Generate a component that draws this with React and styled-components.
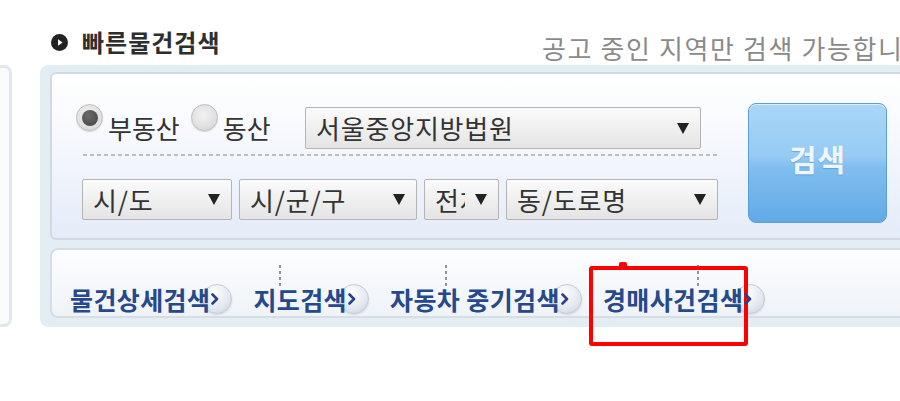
import React from "react";
import styled, { createGlobalStyle } from "styled-components";

//Global
const GlobalStyle = createGlobalStyle`
  html, body {
    margin: 0;
    padding: 0;
    background: #fff;
  }
  body {
    font-family: "Noto Sans CJK KR", "Noto Sans", sans-serif;
  }
`;

const courtSelect = { label: "서울중앙지방법원", width: 396 };
const areaSelects = [
  { label: "시/도", width: 150 },
  { label: "시/군/구", width: 178 },
  { label: "전체", width: 75 },
  { label: "동/도로명", width: 212 },
];
const links = ["물건상세검색", "지도검색", "자동차 중기검색", "경매사건검색"];
const separators = [227, 393, 645];

const PlayIcon = () => (
  <svg width="17" height="17" viewBox="0 0 17 17">
    <circle cx="8.5" cy="8.5" r="8.5" fill="#222" />
    <path d="M7 5.2 L11.6 8.5 L7 11.8 Z" fill="#fff" />
  </svg>
);

const Chevron = () => (
  <svg width="8" height="12" viewBox="0 0 8 12">
    <path
      d="M1.5 1.5 L6 6 L1.5 10.5"
      fill="none"
      stroke="#2c3f8c"
      strokeWidth="2.6"
      strokeLinecap="round"
      strokeLinejoin="round"
    />
  </svg>
);

const QuickSearch = () => {
  return (
    <Page>
      <Header>
        <Title>
          <PlayIcon />
          빠른물건검색
        </Title>
        <Note>공고 중인 지역만 검색 가능합니다</Note>
      </Header>

      <Body>
        <SidePanel />
        <Frame>
          <SearchBox>
            <Form>
              <TopRow>
                <Radio $checked />
                <RadioLabel>부동산</RadioLabel>
                <Radio />
                <RadioLabel $last>동산</RadioLabel>
                <Select $w={courtSelect.width} $push>
                  <SelectText>{courtSelect.label}</SelectText>
                  <Arrow />
                </Select>
              </TopRow>
              <Divider />
              <AreaRow>
                {areaSelects.map((s) => (
                  <Select key={s.label} $w={s.width}>
                    <SelectText>{s.label}</SelectText>
                    <Arrow />
                  </Select>
                ))}
              </AreaRow>
            </Form>
            <SearchButton>검색</SearchButton>
          </SearchBox>

          <LinkBar>
            {separators.map((x) => (
              <Separator key={x} style={{ left: x }} />
            ))}
            {links.map((l) => (
              <LinkItem key={l} href="#">
                <LinkText>{l}</LinkText>
                <ArrowCircle>
                  <Chevron />
                </ArrowCircle>
              </LinkItem>
            ))}
          </LinkBar>
        </Frame>
      </Body>

      <Highlight />
    </Page>
  );
};

const App = () => (
  <>
    <GlobalStyle />
    <QuickSearch />
  </>
);

const Page = styled.div`
  position: relative;
  width: 900px;
  height: 401px;
  overflow: hidden;
  background: #fff;
`;

const Header = styled.div`
  display: flex;
  align-items: flex-start;
  height: 65px;
  padding-left: 51px;
  box-sizing: border-box;
`;

const Title = styled.h2`
  flex: 0 0 491px;
  display: flex;
  align-items: center;
  gap: 14px;
  margin: 27px 0 0;
  font-size: 24px;
  font-weight: 700;
  line-height: 30px;
  letter-spacing: 1px;
  color: #2e2e2e;
`;

const Note = styled.p`
  margin: 32px 0 0;
  white-space: nowrap;
  font-size: 26px;
  line-height: 32px;
  letter-spacing: 1.6px;
  color: #8a8a8a;
`;

const Body = styled.div`
  display: flex;
  height: 262px;
`;

const SidePanel = styled.div`
  flex: 0 0 12px;
  box-sizing: border-box;
  margin-right: 28px;
  border: 3px solid #e2e8ed;
  border-left: none;
  border-radius: 0 8px 8px 0;
  background: #f9fbfc;
`;

const Frame = styled.div`
  flex: 0 0 880px;
  display: flex;
  flex-direction: column;
  gap: 8px;
  box-sizing: border-box;
  padding: 7px 0 9px 10px;
  background: #e3eef4;
  border-radius: 8px 0 0 8px;
`;

const SearchBox = styled.div`
  display: flex;
  height: 168px;
  box-sizing: border-box;
  padding-left: 24px;
  border: 2px solid #d3d9de;
  border-right: none;
  border-radius: 6px 0 0 6px;
  background: linear-gradient(#ffffff 0%, #f7f9fd 35%, #e4ecf9 100%);
`;

const Form = styled.div`
  flex: 0 0 644px;
  min-width: 0;
  display: flex;
  flex-direction: column;
`;

const TopRow = styled.div`
  display: flex;
  align-items: center;
  height: 42px;
  margin-top: 33px;
  padding-right: 19px;
`;

const Radio = styled.span`
  position: relative;
  align-self: flex-start;
  flex: 0 0 27px;
  height: 27px;
  margin-top: -3px;
  margin-right: 5px;
  box-sizing: border-box;
  border-radius: 50%;
  border: 1px solid #bdbdbd;
  background: radial-gradient(circle at 45% 40%, #f2f2f2, #d4d4d4);
  box-shadow: 0 1px 1px rgba(0, 0, 0, 0.15);

  &::after {
    content: "";
    display: ${(p) => (p.$checked ? "block" : "none")};
    position: absolute;
    left: 4.5px;
    top: 4.5px;
    width: 16px;
    height: 16px;
    border-radius: 50%;
    background: radial-gradient(circle at 40% 35%, #6a6a6a, #444);
  }
`;

const RadioLabel = styled.span`
  margin-right: ${(p) => (p.$last ? 0 : 11)}px;
  font-size: 26px;
  line-height: 42px;
  color: #333;
`;

const Select = styled.div`
  display: flex;
  align-items: center;
  flex: 0 0 ${(p) => p.$w}px;
  width: ${(p) => p.$w}px;
  min-width: 0;
  height: 42px;
  box-sizing: border-box;
  margin-left: ${(p) => (p.$push ? "auto" : 0)};
  padding: 0 11px 0 10px;
  border: 1px solid #b4b4b4;
  border-radius: 2px;
  background: linear-gradient(#fbfbfb, #e4e4e4);
  overflow: hidden;
`;

const SelectText = styled.span`
  flex: 1;
  min-width: 0;
  overflow: hidden;
  white-space: nowrap;
  margin-right: 10px;
  font-size: 26px;
  line-height: 40px;
  letter-spacing: 0.8px;
  color: #333;
`;

const Arrow = styled.span`
  flex: 0 0 auto;
  width: 0;
  height: 0;
  border-left: 6.5px solid transparent;
  border-right: 6.5px solid transparent;
  border-top: 11px solid #222;
`;

const Divider = styled.div`
  width: 637px;
  height: 2px;
  margin: 5px 0 0 7px;
  background: repeating-linear-gradient(
    90deg,
    #b7bec8 0 4px,
    transparent 4px 7px
  );
`;

const AreaRow = styled.div`
  display: flex;
  gap: 7px;
  height: 41px;
  margin-top: 23px;
  padding-left: 6px;

  & > div {
    height: 41px;
  }
`;

const SearchButton = styled.button`
  flex: 0 0 139px;
  height: 120px;
  margin: 29px 0 0 28px;
  padding: 0 0 10px;
  border: 1px solid #5a9fdc;
  border-radius: 8px;
  background: linear-gradient(
    #a9d6f6 0%,
    #96cbf3 44%,
    #80bdef 54%,
    #62aae6 100%
  );
  box-shadow: inset 0 1px 0 rgba(255, 255, 255, 0.6);
  font-family: inherit;
  font-size: 30px;
  font-weight: 700;
  letter-spacing: 1px;
  color: #eef6ff;
  text-shadow: 0 1px 1px rgba(40, 90, 150, 0.3);
`;

const LinkBar = styled.div`
  position: relative;
  display: flex;
  gap: 21px;
  height: 70px;
  box-sizing: border-box;
  padding: 33px 0 1px 18px;
  border: 2px solid #d6dde3;
  border-right: none;
  border-radius: 8px 0 0 8px;
  background: linear-gradient(#fcfdfe, #eff3f8);
`;

const Separator = styled.span`
  position: absolute;
  top: 15px;
  width: 2px;
  height: 24px;
  background: repeating-linear-gradient(#8d939a 0 3px, transparent 3px 6px);
`;

const LinkItem = styled.a`
  display: flex;
  align-items: center;
  flex: 0 0 auto;
  height: 32px;
  text-decoration: none;
`;

const LinkText = styled.span`
  position: relative;
  z-index: 1;
  font-size: 25px;
  font-weight: 700;
  line-height: 32px;
  letter-spacing: 0.4px;
  color: #25498b;
  white-space: nowrap;
`;

const ArrowCircle = styled.span`
  display: flex;
  align-items: center;
  flex: 0 0 30px;
  width: 30px;
  height: 30px;
  box-sizing: border-box;
  margin-left: -8px;
  padding-left: 8px;
  border-radius: 50%;
  border: 1px solid #c4ccd6;
  background: radial-gradient(circle at 40% 30%, #ffffff, #e2e8ef 60%, #c6cfda);
  box-shadow: 0 1px 2px rgba(0, 0, 0, 0.12);

  svg {
    position: relative;
    z-index: 2;
  }
`;

const Highlight = styled.div`
  position: absolute;
  left: 589px;
  top: 266px;
  width: 159px;
  height: 80px;
  box-sizing: border-box;
  border: 4px solid #ff0000;
  border-radius: 3px;

  &::before {
    content: "";
    position: absolute;
    left: 26px;
    top: -8px;
    width: 8px;
    height: 5px;
    border-radius: 2px 2px 0 0;
    background: #ff0000;
  }
`;

export default App;
